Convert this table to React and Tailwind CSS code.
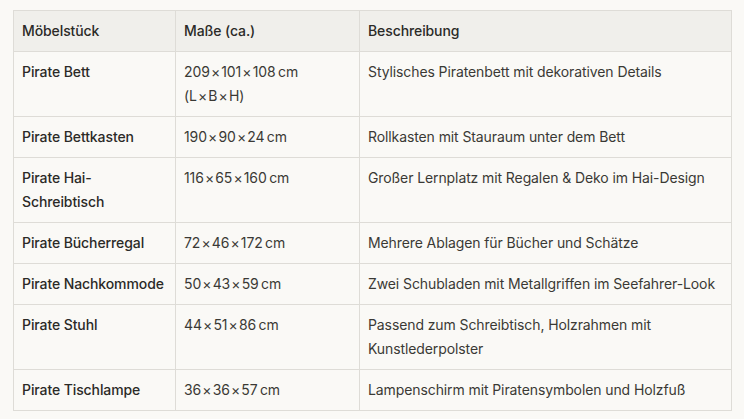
const x = "\u200A×\u200A";

const rows = [
  { name: "Pirate Bett", size: [`209${x}101${x}108\u2009cm`, `(L${x}B${x}H)`], desc: "Stylisches Piratenbett mit dekorativen Details" },
  { name: "Pirate Bettkasten", size: [`190${x}90${x}24\u2009cm`], desc: "Rollkasten mit Stauraum unter dem Bett" },
  { name: "Pirate Hai-Schreibtisch", size: [`116${x}65${x}160\u2009cm`], desc: "Großer Lernplatz mit Regalen & Deko im Hai-Design" },
  { name: "Pirate Bücherregal", size: [`72${x}46${x}172\u2009cm`], desc: "Mehrere Ablagen für Bücher und Schätze" },
  { name: "Pirate Nachkommode", size: [`50${x}43${x}59\u2009cm`], desc: "Zwei Schubladen mit Metallgriffen im Seefahrer-Look" },
  { name: "Pirate Stuhl", size: [`44${x}51${x}86\u2009cm`], desc: "Passend zum Schreibtisch, Holzrahmen mit Kunstlederpolster" },
  { name: "Pirate Tischlampe", size: [`36${x}36${x}57\u2009cm`], desc: "Lampenschirm mit Piratensymbolen und Holzfuß" },
];

export default function App() {
  return (
    <div className="min-h-screen bg-[#faf9f6] pt-[10px] pl-[13px] font-['Inter',sans-serif] text-[14px] tracking-[-0.1px] text-[#2b2a27]">
      <table className="w-[719px] border-collapse table-fixed">
        <colgroup>
          <col className="w-[162px]" />
          <col className="w-[184px]" />
          <col />
        </colgroup>
        <thead>
          <tr className="bg-[#f0efeb]">
            <th className="border border-[#dedcd7] px-2 py-2 text-left font-medium leading-6">Möbelstück</th>
            <th className="border border-[#dedcd7] px-2 py-2 text-left font-medium leading-6">Maße (ca.)</th>
            <th className="border border-[#dedcd7] px-2 py-2 text-left font-medium leading-6">Beschreibung</th>
          </tr>
        </thead>
        <tbody>
          {rows.map((r) => (
            <tr key={r.name}>
              <td className="border border-[#dedcd7] px-2 py-2 align-top font-medium leading-6">{r.name}</td>
              <td className="border border-[#dedcd7] px-2 py-2 align-top leading-6 text-[#3a3935]">
                {r.size.map((s, i) => (
                  <span key={i} className="block whitespace-nowrap">
                    {s}
                  </span>
                ))}
              </td>
              <td className="border border-[#dedcd7] px-2 py-2 align-top leading-6 text-[#3a3935]">{r.desc}</td>
            </tr>
          ))}
        </tbody>
      </table>
    </div>
  );
}
